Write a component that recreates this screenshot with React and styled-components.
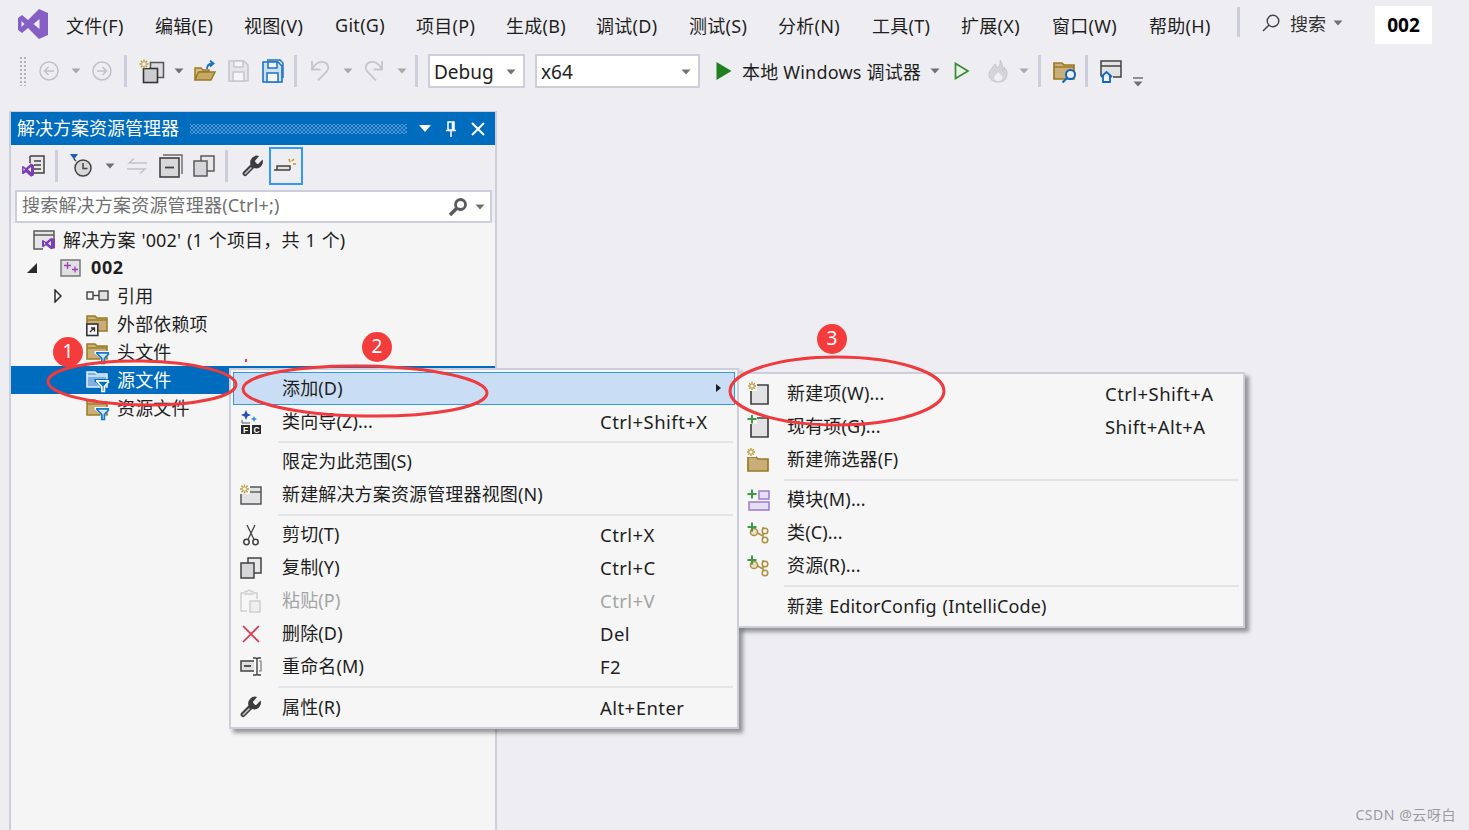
import React from "react";
import styled, { createGlobalStyle } from "styled-components";

const FONT = `"Noto Sans", "Noto Sans CJK SC", sans-serif`;

const Global = createGlobalStyle`
  html, body { margin: 0; padding: 0; background: #eeeef2; overflow: hidden; }
  #root { width: 1469px; height: 830px; }
`;

const Page = styled.div`
  position: relative;
  width: 1469px;
  height: 830px;
  overflow: hidden;
  display: flex;
  flex-direction: column;
  background: #eeeef2;
  font-family: ${FONT};
  font-size: 18px;
  color: #1e1e1e;
`;

/* ---------- top menu ---------- */
const MenuBar = styled.div`
  display: flex;
  align-items: center;
  height: 50px;
  padding-left: 18px;
  flex: none;
`;
const Logo = styled.svg`
  display: block;
  flex: none;
  margin-right: 18px;
  margin-top: -2px;
`;
const MenuEntry = styled.div`
  width: ${(p) => p.$w}px;
  flex: none;
  white-space: nowrap;
  letter-spacing: 0.3px;
`;
const MenuSep = styled.div`
  width: 3px;
  height: 30px;
  margin-top: -6px;
  background: #cccedb;
  flex: none;
`;
const SearchGroup = styled.div`
  display: flex;
  align-items: center;
  margin-left: 22px;
  margin-top: -4px;
  color: #333;
`;
const SearchWord = styled.span`
  margin: 0 7px 0 10px;
`;
const TitleBox = styled.div`
  margin-left: 32px;
  width: 57px;
  height: 38px;
  background: #fff;
  display: flex;
  align-items: center;
  justify-content: center;
  font-weight: 700;
  font-size: 19px;
  color: #000;
`;

/* ---------- main toolbar ---------- */
const ToolBar = styled.div`
  display: flex;
  align-items: center;
  height: 34px;
  margin-top: 4px;
  padding-left: 19px;
  flex: none;
`;
const Slot = styled.div`
  flex: none;
  width: ${(p) => p.$w}px;
  margin-left: ${(p) => p.$ml || 0}px;
  margin-top: ${(p) => p.$mt || 0}px;
  display: flex;
  align-items: center;
  justify-content: center;
`;
const ToolSep = styled.div`
  flex: none;
  width: 3px;
  height: 32px;
  margin-left: ${(p) => p.$ml || 0}px;
  background: #cccedb;
`;
const Gripper = styled.div`
  flex: none;
  width: 8px;
  height: 30px;
  background-image: radial-gradient(#b4b4ba 1px, transparent 1.2px);
  background-size: 4px 4px;
`;
const Combo = styled.div`
  flex: none;
  box-sizing: border-box;
  width: ${(p) => p.$w}px;
  margin-left: 10px;
  height: 34px;
  background: #fff;
  border: 2px solid #cccedb;
  display: flex;
  align-items: center;
  justify-content: space-between;
  padding: 1px 7px 0 4px;
  font-size: 19px;
`;
const RunLabel = styled.div`
  flex: none;
  width: 180px;
  margin-left: 10px;
  white-space: nowrap;
  letter-spacing: 0.2px;
`;

/* ---------- solution explorer ---------- */
const Panel = styled.div`
  margin: 23px 0 0 9px;
  width: 484px;
  flex: 1;
  min-height: 0;
  display: flex;
  flex-direction: column;
  border-left: 2px solid #cccedb;
  border-right: 2px solid #cccedb;
  border-top: 1px solid #cccedb;
`;
const TitleBar = styled.div`
  height: 33px;
  flex: none;
  background: #006cbe;
  color: #fff;
  display: flex;
  align-items: center;
  padding-left: 6px;
`;
const TitleText = styled.div`
  white-space: nowrap;
  flex: none;
  padding-bottom: 4px;
`;
const TitleDots = styled.div`
  flex: none;
  width: 217px;
  height: 10px;
  margin: 0 11px;
  background-image:
    radial-gradient(#4f97d6 0.9px, transparent 1.1px),
    radial-gradient(#4f97d6 0.9px, transparent 1.1px);
  background-size: 4px 4px;
  background-position: 0 0, 2px 2px;
`;
const TitleButton = styled.div`
  flex: none;
  width: 14px;
  margin-left: ${(p) => p.$ml || 0}px;
  display: flex;
  justify-content: center;
`;
const PanelTools = styled.div`
  height: 42px;
  flex: none;
  display: flex;
  align-items: center;
  padding-left: 10px;
`;
const ActiveTool = styled.div`
  flex: none;
  box-sizing: border-box;
  width: 34px;
  height: 38px;
  margin-left: 6px;
  border: 2px solid #3399ff;
  display: flex;
  align-items: center;
  justify-content: center;
`;
const PanelSep = styled.div`
  flex: none;
  width: 3px;
  height: 32px;
  margin-left: ${(p) => p.$ml || 0}px;
  background: #cccedb;
`;
const PanelSearch = styled.div`
  box-sizing: border-box;
  flex: none;
  height: 33px;
  margin: 3px 3px 0 4px;
  background: #fff;
  border: 2px solid #cccedb;
  display: flex;
  align-items: center;
  justify-content: space-between;
  padding: 0 5px;
  color: #717171;
`;
const SearchHint = styled.span`
  letter-spacing: 0.2px;
  padding-bottom: 5px;
`;
const SearchEnd = styled.div`
  display: flex;
  align-items: center;
  gap: 7px;
`;
const Tree = styled.div`
  flex: 1;
  background: #f5f5f5;
  padding-top: 3px;
`;
const TreeRow = styled.div`
  box-sizing: border-box;
  height: 28px;
  padding-bottom: 2px;
  display: flex;
  align-items: center;
  white-space: pre;
  word-spacing: 1px;
  letter-spacing: ${(p) => (p.$bold ? "0.6px" : "0.15px")};
  padding-left: ${(p) => p.$p}px;
  background: ${(p) => (p.$sel ? "#006cbe" : "transparent")};
  color: ${(p) => (p.$sel ? "#fff" : "#1e1e1e")};
  font-weight: ${(p) => (p.$bold ? 700 : 400)};
`;
const Expander = styled.div`
  flex: none;
  width: 10px;
  margin-top: 2px;
  display: flex;
  justify-content: center;
`;
const TreeIcon = styled.div`
  flex: none;
  width: ${(p) => p.$w}px;
  margin-left: ${(p) => p.$ml || 0}px;
  margin-right: ${(p) => p.$mr}px;
  margin-top: ${(p) => p.$mt ?? 6}px;
  display: flex;
  align-items: center;
`;

/* ---------- context menus ---------- */
const ContextMenu = styled.div`
  position: absolute;
  left: ${(p) => p.$x}px;
  top: ${(p) => p.$y}px;
  width: ${(p) => p.$w}px;
  box-sizing: border-box;
  background: #f6f6f6;
  border: 2px solid #cccedb;
  padding: ${(p) => p.$pt}px 2px 3px;
  box-shadow: 4px 4px 4px rgba(0, 0, 0, 0.38);
  z-index: ${(p) => p.$z};
`;
const Item = styled.div`
  box-sizing: border-box;
  height: 33px;
  display: flex;
  align-items: center;
  position: relative;
  white-space: nowrap;
  color: ${(p) => (p.$off ? "#a2a4a5" : "#1e1e1e")};
  background: ${(p) => (p.$hot ? "#c9def5" : "transparent")};
  outline: ${(p) => (p.$hot ? "1px solid #3399e0" : "none")};
  outline-offset: -1px;
`;
const ItemIcon = styled.div`
  flex: none;
  width: ${(p) => p.$w}px;
  display: flex;
  justify-content: center;
  align-items: center;
`;
const ItemLabel = styled.div`
  flex: none;
  width: 318px;
  margin-left: ${(p) => p.$ml}px;
  padding-bottom: ${(p) => p.$pb}px;
  letter-spacing: 0.15px;
  word-spacing: 1px;
`;
const ItemKeys = styled.div`
  flex: none;
  font-size: 18.5px;
  letter-spacing: 0.45px;
`;
const ItemArrow = styled.div`
  position: absolute;
  right: 14px;
  top: 12px;
  width: 0;
  height: 0;
  border-left: 5px solid #1e1e1e;
  border-top: 4px solid transparent;
  border-bottom: 4px solid transparent;
`;
const MenuRule = styled.div`
  height: ${(p) => p.$h || 7}px;
  display: flex;
  align-items: center;
  padding-left: ${(p) => p.$inset}px;
  padding-right: 2px;
  &::after {
    content: "";
    flex: 1;
    height: 2px;
    background: #e3e3e8;
  }
`;

/* ---------- annotations ---------- */
const Overlay = styled.svg`
  position: absolute;
  inset: 0;
  z-index: 5;
  pointer-events: none;
`;
const Badge = styled.div`
  position: absolute;
  left: ${(p) => p.$x - 15}px;
  top: ${(p) => p.$y - 15}px;
  width: 30px;
  height: 30px;
  border-radius: 50%;
  background: #f53c3c;
  color: #fff;
  font-size: 19px;
  line-height: 28px;
  text-align: center;
  z-index: 6;
`;
const Watermark = styled.div`
  position: absolute;
  right: 13px;
  bottom: 6px;
  font-size: 14px;
  letter-spacing: 0.55px;
  color: #9b9b9f;
  z-index: 6;
`;

/* ---------- icons ---------- */
const G = styled.svg`
  display: block;
  flex: none;
`;
const Svg = ({ w, h, children }) => (
  <G width={w} height={h} viewBox={`0 0 ${w} ${h}`} fill="none">
    {children}
  </G>
);
const Caret = ({ c = "#717171" }) => (
  <Svg w={10} h={6}>
    <path d="M0.5 0.5h9L5 5.5z" fill={c} />
  </Svg>
);
const Spark = ({ x, y, r = 4.5, c = "#c09c3c" }) => (
  <g stroke={c} strokeWidth="1.4">
    <path d={`M${x - r} ${y}H${x + r}M${x} ${y - r}V${y + r}`} />
    <path d={`M${x - r * 0.7} ${y - r * 0.7}L${x + r * 0.7} ${y + r * 0.7}M${x + r * 0.7} ${y - r * 0.7}L${x - r * 0.7} ${y + r * 0.7}`} />
    <circle cx={x} cy={y} r={r * 0.4} fill="#f6f6f6" stroke="none" />
  </g>
);
const Plus = ({ x, y, r = 5 }) => (
  <path d={`M${x - r} ${y}H${x + r}M${x} ${y - r}V${y + r}`} stroke="#3c9a48" strokeWidth="2" />
);
const Circle = ({ dir }) => (
  <Svg w={20} h={20}>
    <circle cx="10" cy="10" r="9" stroke="#c2c2c6" strokeWidth="1.5" />
    <path d={dir < 0 ? "M15 10H6M9.5 6L5.5 10l4 4" : "M5 10h9M10.5 6l4 4-4 4"} stroke="#c2c2c6" strokeWidth="1.5" />
  </Svg>
);
const NewProject = () => (
  <Svg w={26} h={25}>
    <rect x="11.500" y="3.500" width="13" height="15" fill="#dcdcde" stroke="#555" strokeWidth="1.500" />
    <rect x="4.500" y="9.500" width="14" height="14" fill="#cdcdd0" stroke="#333" strokeWidth="1.600" />
    <rect x="0" y="0" width="10" height="9" fill="#eeeef2" />
    <Spark x={5} y={5} r={4.600} />
  </Svg>
);
const OpenFolder = () => (
  <Svg w={22} h={22}>
    <path d="M1 8h6l2 2h6v2H5L1 20z" fill="#d6bd85" stroke="#9a7a22" strokeWidth="1.5" />
    <path d="M1 20l3.5-8H21l-4 8z" fill="#c7a865" stroke="#9a7a22" strokeWidth="1.5" />
    <path d="M13 9c0-4 2-5.5 6-5.5M16 0.8l3.5 2.7L16 6.5" stroke="#1c72c4" strokeWidth="1.8" />
  </Svg>
);
const Floppy = ({ c, f }) => (
  <>
    <path d="M1 1h15l4 4v16H1z" fill={f} stroke={c} strokeWidth="1.6" />
    <rect x="6" y="1" width="9" height="6" fill="#f5f5f7" stroke={c} strokeWidth="1.5" />
    <rect x="5" y="12" width="11" height="9" fill="#f5f5f7" stroke={c} strokeWidth="1.5" />
  </>
);
const Save = () => (
  <Svg w={22} h={22}>
    <Floppy c="#c6c6ca" f="#e6e6ea" />
  </Svg>
);
const SaveAll = () => (
  <Svg w={22} h={24}>
    <path d="M5 1h13l3 3v15" stroke="#1c72c4" strokeWidth="1.4" />
    <g transform="translate(0 2)">
      <Floppy c="#1c72c4" f="#cfe0f2" />
    </g>
  </Svg>
);
const Undo = ({ flip }) => (
  <Svg w={20} h={22}>
    <g transform={flip ? "matrix(-1 0 0 1 20 0)" : undefined} stroke="#c6c6ca" strokeWidth="1.800">
      <path d="M2 1v8.500h8.500" />
      <path d="M2.500 8.500C5 3.500 10 1 14 2.200c5 1.500 5 7 3 9L8 20.500" />
    </g>
  </Svg>
);
const Play = () => (
  <Svg w={16} h={20}>
    <path d="M0.5 1l15 9-15 9z" fill="#1f801f" />
  </Svg>
);
const PlayLine = () => (
  <Svg w={16} h={18}>
    <path d="M1.500 1.500l12.500 7.500-12.500 7.500z" fill="#e9f1e9" stroke="#388a34" strokeWidth="1.7" />
  </Svg>
);
const Flame = () => (
  <Svg w={20} h={24}>
    <path d="M12 1c1 5-1 6-3 8-1-2-1-3-2-4-2 4-6 6-6 11 0 4 4 7 9 7 6 0 9-3 9-8 0-3-1-5-3-7 0 2 0 3-1 4 0-4-1-8-3-11z" fill="#d5d5d8" stroke="#c6c6ca" />
    <path d="M10 13c-2 3-4 4-4 6 0 2 2 3 4 3 3 0 5-2 4-5z" fill="#f0f0f2" />
  </Svg>
);
const FolderFind = () => (
  <Svg w={24} h={24}>
    <path d="M1 3h8l2 2h10v14H1z" fill="#c9ae79" stroke="#9a7a22" strokeWidth="1.7" />
    <path d="M1 7h20" stroke="#9a7a22" strokeWidth="1.4" />
    <circle cx="17.500" cy="14.500" r="4.500" fill="#eef" stroke="#1166bb" strokeWidth="2" />
    <path d="M14 18l-4.500 4.500" stroke="#1166bb" strokeWidth="2.200" />
  </Svg>
);
const WindowHome = () => (
  <Svg w={22} h={24}>
    <path d="M1 16V1h20v16h-8" stroke="#424242" strokeWidth="1.5" fill="#e2e2e5" />
    <path d="M1 6h20" stroke="#424242" strokeWidth="1.5" />
    <path d="M1 17l5.500-5 5.500 5M3 15.500V22h7v-6.500" stroke="#1166bb" strokeWidth="1.800" fill="#f6f6fa" />
  </Svg>
);
const Overflow = () => (
  <Svg w={10} h={10}>
    <path d="M0 1h10" stroke="#717171" strokeWidth="1.500" />
    <path d="M0.500 4.500h9L5 9.500z" fill="#717171" />
  </Svg>
);
const Lens = ({ c = "#424242", s = 18 }) => (
  <G width={s} height={s} viewBox="0 0 18 18" fill="none">
    <circle cx="11" cy="7" r="5.800" stroke={c} strokeWidth="1.400" />
    <path d="M6.800 11.200L1 17" stroke={c} strokeWidth="1.500" />
  </G>
);
const SolSwitch = () => (
  <Svg w={24} h={22}>
    <path d="M9 1h14v17H12" fill="#e8e8ea" stroke="#424242" strokeWidth="1.500" />
    <path d="M9 1v8" stroke="#424242" strokeWidth="1.500" />
    <path d="M13 6h7M13 10h7M13 14h7" stroke="#424242" strokeWidth="1.400" />
    <path d="M12 9v13l-4-2-4-3-3 2V9l3 2 4-3z" fill="#eeeef2" />
    <path d="M13 10l-3-1.500-5 4.500-3-2-1 .6v7l1 .6 3-2 5 4.500 3-1.500zM2.500 13v3l1.500-1.500zM10 12l-3 2.500 3 2.500z" fill="#7b3fb5" fillRule="evenodd" />
  </Svg>
);
const History = () => (
  <Svg w={24} h={24}>
    <path d="M0 0h8L4 5.500z" fill="#1a5fb0" />
    <circle cx="13" cy="14" r="8" fill="#d8d8da" stroke="#424242" strokeWidth="1.500" />
    <path d="M13 9v5.500h4.500" stroke="#424242" strokeWidth="1.500" />
    <path d="M4 5l2 2" stroke="#424242" strokeWidth="1.500" />
  </Svg>
);
const Sync = () => (
  <Svg w={20} h={16}>
    <path d="M20 5H2l5-4.500M0 11h18l-5 4.500" stroke="#c2c2c6" strokeWidth="1.400" />
  </Svg>
);
const Collapse = () => (
  <Svg w={24} h={24}>
    <path d="M4 1h19v19" stroke="#6a6a6a" strokeWidth="1.400" />
    <rect x="1" y="4" width="19" height="19" fill="#d8d8da" stroke="#424242" strokeWidth="1.600" />
    <path d="M6 13.500h9" stroke="#424242" strokeWidth="1.800" />
  </Svg>
);
const CopyPages = ({ s = 22, c = "#5a5a5a" }) => (
  <G width={s} height={s} viewBox="0 0 22 22" fill="none">
    <rect x="8" y="1" width="13" height="15" fill="#e8e8ea" stroke={c} strokeWidth="1.500" />
    <rect x="1" y="6" width="13" height="15" fill="#d6d6d8" stroke={c} strokeWidth="1.500" />
  </G>
);
const Wrench = ({ s = 25 }) => (
  <G width={s} height={s} viewBox="0 0 24 24">
    <path d="M14.700 6.300a1 1 0 0 0 0 1.400l1.600 1.600a1 1 0 0 0 1.400 0l4-4a6.500 6.500 0 0 1-8.200 8.200l-6.900 6.900a2.400 2.400 0 0 1-3.400-3.400l6.900-6.900a6.500 6.500 0 0 1 8.200-8.200z" fill="#3c3c3c" />
    <path d="M11 13L4.500 19.500" stroke="#c4c4c4" strokeWidth="1.500" />
  </G>
);
const ShowAll = () => (
  <Svg w={24} h={18}>
    <path d="M0 13h16M3 13V9h13v4" stroke="#424242" strokeWidth="1.500" fill="#e0e0e0" />
    <path d="M15 2l1 3M19 7h3M18 4l2-2" stroke="#c49a1c" strokeWidth="1.500" />
  </Svg>
);
const SolutionIcon = () => (
  <Svg w={23} h={20}>
    <path d="M10 19H1V1h20v9" fill="#e6e6e8" stroke="#5a5a5a" strokeWidth="1.500" />
    <path d="M1 5h20" stroke="#5a5a5a" strokeWidth="1.500" />
    <path d="M22 9l-4-1-5 4-3-2-1 .6v6l1 .6 3-2 5 4 4-1zM11 12v3l1.500-1.500zM18 11l-3 2.500 3 2.500z" fill="#7b3fb5" fillRule="evenodd" />
  </Svg>
);
const ProjectIcon = () => (
  <Svg w={21} h={18}>
    <rect x="1" y="1" width="19" height="16" fill="#e0e0e2" stroke="#777" strokeWidth="1.500" />
    <path d="M4 6.500h7M7.500 3v7M12 10.500h6M15 7.500v6" stroke="#a33cb0" strokeWidth="1.300" />
  </Svg>
);
const RefIcon = () => (
  <Svg w={24} h={14}>
    <rect x="1" y="3" width="6" height="7" fill="#f5f5f5" stroke="#424242" strokeWidth="1.400" />
    <path d="M7 6.500h6" stroke="#424242" strokeWidth="1.400" />
    <rect x="13" y="2" width="9" height="9" fill="#e0e0e0" stroke="#424242" strokeWidth="1.400" />
  </Svg>
);
const FolderShape = ({ f = "#c9ae79", c = "#9a7a22" }) => (
  <>
    <path d="M1 1h8l2 2h10v13H1z" fill={f} stroke={c} strokeWidth="1.500" />
    <path d="M1 5h20" stroke={c} strokeWidth="1.300" />
  </>
);
const DepsIcon = () => (
  <Svg w={22} h={22}>
    <FolderShape />
    <rect x="0.800" y="9" width="11" height="11.500" fill="#f5f5f5" stroke="#333" strokeWidth="1.600" />
    <path d="M4 17l4-4M5 13h3.500v3.500" stroke="#333" strokeWidth="1.300" />
  </Svg>
);
const FilterIcon = ({ sel }) => (
  <Svg w={24} h={22}>
    {sel ? <FolderShape f="#7fb0e0" c="#e8f1fa" /> : <FolderShape />}
    <path d="M8.500 8h15v2.500L19.500 15v7h-5v-7l-6-4.500z" fill={sel ? "#006cbe" : "#f5f5f5"} />
    <path d="M10 9.800h13M11 10.500l4.800 5v5h2.600v-5l4.600-5" fill={sel ? "#006cbe" : "#d5e8f8"} stroke={sel ? "#fff" : "#1478cc"} strokeWidth="1.700" />
  </Svg>
);
const ClassWizard = () => (
  <Svg w={22} h={24}>
    <path d="M6 0l1.500 3.500L11 5 7.500 6.500 6 10 4.500 6.500 1 5l3.500-1.500z" fill="#2b4fb8" />
    <path d="M14 6l1 2 2 1-2 1-1 2-1-2-2-1 2-1z" fill="#2f8fe0" />
    <path d="M2 10v3h8" stroke="#555" strokeWidth="1" />
    <rect x="1" y="15" width="9" height="9" fill="#2a2a2a" />
    <rect x="12" y="15" width="9" height="9" fill="#2a2a2a" />
    <text x="5.500" y="22.700" fontSize="8.500" fontWeight="700" fill="#fff" textAnchor="middle" fontFamily="Liberation Sans">F</text>
    <text x="16.500" y="22.700" fontSize="8.500" fontWeight="700" fill="#fff" textAnchor="middle" fontFamily="Liberation Sans">C</text>
  </Svg>
);
const NewView = () => (
  <Svg w={23} h={22}>
    <rect x="2" y="3" width="20" height="17" fill="#e2e2e4" stroke="#555" strokeWidth="1.500" />
    <path d="M2 8h20" stroke="#555" strokeWidth="1.400" />
    <rect x="0" y="0" width="11" height="10" fill="#f6f6f6" />
    <Spark x={5.500} y={5} r={4.500} />
  </Svg>
);
const Scissors = () => (
  <Svg w={16} h={22}>
    <circle cx="3.500" cy="18" r="2.700" stroke="#424242" strokeWidth="1.500" />
    <circle cx="12.500" cy="18" r="2.700" stroke="#424242" strokeWidth="1.500" />
    <path d="M5 15.500L12 1M11 15.500L4 1" stroke="#424242" strokeWidth="1.300" />
  </Svg>
);
const Paste = () => (
  <Svg w={21} h={24}>
    <path d="M4 4H1v18h6M14 4h3v6" stroke="#d0d0d3" strokeWidth="1.500" />
    <path d="M5 5V2.500h2.500a1.500 1.500 0 0 1 3 0H13V5z" stroke="#d0d0d3" strokeWidth="1.300" />
    <rect x="10" y="12" width="10" height="11" fill="#efeff0" stroke="#d0d0d3" strokeWidth="1.500" />
  </Svg>
);
const Cross = () => (
  <Svg w={20} h={20}>
    <path d="M2 2l16 16M18 2L2 18" stroke="#d9344a" strokeWidth="1.700" />
  </Svg>
);
const Rename = () => (
  <Svg w={22} h={20}>
    <path d="M14 4H1v10h13" fill="#e0e0e2" stroke="#424242" strokeWidth="1.500" />
    <path d="M4 9h7" stroke="#424242" strokeWidth="1.800" />
    <path d="M13 1h3l1 1 1-1h3M17 2v15M13 18h3l1-1 1 1h3" stroke="#424242" strokeWidth="1.400" />
    <path d="M19 4h2v10h-2" stroke="#777" strokeWidth="1.200" />
  </Svg>
);
const DocNew = ({ plus }) => (
  <Svg w={23} h={24}>
    <path d="M6 3h15v19H4V8" fill="#e2e2e4" stroke="#424242" strokeWidth="1.700" />
    <rect x="0" y="0" width="10" height="9" fill="#f6f6f6" />
    {plus ? <Plus x={5} y={4} r={4.500} /> : <Spark x={5} y={4} r={4} />}
  </Svg>
);
const FolderNew = () => (
  <Svg w={24} h={24}>
    <path d="M2 9h8l2 2h10v12H2z" fill="#c9ae79" stroke="#9a7a22" strokeWidth="1.700" />
    <rect x="0" y="0" width="10" height="9" fill="#f6f6f6" />
    <Spark x={5} y={4} r={4} />
  </Svg>
);
const ModuleIcon = () => (
  <Svg w={23} h={22}>
    <Plus x={5} y={5} r={4.500} />
    <rect x="12" y="2" width="10" height="8" fill="#e6dff3" stroke="#a080cf" strokeWidth="1.600" />
    <rect x="2" y="13" width="20" height="8" fill="#e6dff3" stroke="#a080cf" strokeWidth="1.600" />
  </Svg>
);
const NodesIcon = () => (
  <Svg w={23} h={22}>
    <path d="M7 9l9 5M16 5v13" stroke="#b08f40" strokeWidth="1.500" />
    <circle cx="7" cy="10" r="3.600" fill="#e8dfc4" stroke="#b08f40" strokeWidth="1.500" />
    <circle cx="18" cy="9" r="2.800" fill="#f6f6f6" stroke="#b08f40" strokeWidth="1.500" />
    <circle cx="18" cy="18" r="2.800" fill="#f6f6f6" stroke="#b08f40" strokeWidth="1.500" />
    <Plus x={5} y={5} r={4.500} />
  </Svg>
);

/* ---------- data ---------- */
const menus = [
  ["文件(F)", 89], ["编辑(E)", 89], ["视图(V)", 91], ["Git(G)", 81], ["项目(P)", 90],
  ["生成(B)", 90], ["调试(D)", 93], ["测试(S)", 89], ["分析(N)", 94], ["工具(T)", 89],
  ["扩展(X)", 91], ["窗口(W)", 97], ["帮助(H)", 88],
];

const Row = ({ icon, label, keys, off, hot, w, ml, pb }) => (
  <Item $off={off} $hot={hot}>
    <ItemIcon $w={w}>{icon}</ItemIcon>
    <ItemLabel $ml={ml} $pb={pb}>{label}</ItemLabel>
    {keys && <ItemKeys>{keys}</ItemKeys>}
    {hot && <ItemArrow />}
  </Item>
);

export default function App() {
  const main = { w: 35, ml: 14, pb: 3 };
  const sub = { w: 34, ml: 12, pb: 4 };
  return (
    <Page>
      <Global />
      <MenuBar>
        <Logo width="30" height="30" viewBox="0 0 30 30">
          <path
            fillRule="evenodd"
            fill="#865fc5"
            d="M21 0l9 4v22l-9 4-11-11-6 5-4-3V9l4-3 6 5zM3.500 12v6l3-3zM15.500 15l6 5V10z"
          />
        </Logo>
        {menus.map(([t, w]) => (
          <MenuEntry key={t} $w={w}>{t}</MenuEntry>
        ))}
        <MenuSep />
        <SearchGroup>
          <Lens />
          <SearchWord>搜索</SearchWord>
          <Caret />
        </SearchGroup>
        <TitleBox>002</TitleBox>
      </MenuBar>

      <ToolBar>
        <Gripper />
        <Slot $w={20} $ml={12}><Circle dir={-1} /></Slot>
        <Slot $w={10} $ml={12}><Caret c="#a8a8ac" /></Slot>
        <Slot $w={20} $ml={11}><Circle dir={1} /></Slot>
        <ToolSep $ml={12} />
        <Slot $w={26} $ml={12}><NewProject /></Slot>
        <Slot $w={10} $ml={9}><Caret /></Slot>
        <Slot $w={22} $ml={10}><OpenFolder /></Slot>
        <Slot $w={22} $ml={12}><Save /></Slot>
        <Slot $w={22} $ml={12}><SaveAll /></Slot>
        <ToolSep $ml={10} />
        <Slot $w={20} $ml={13}><Undo /></Slot>
        <Slot $w={10} $ml={13}><Caret c="#a8a8ac" /></Slot>
        <Slot $w={20} $ml={11}><Undo flip /></Slot>
        <Slot $w={10} $ml={13}><Caret c="#a8a8ac" /></Slot>
        <ToolSep $ml={8} />
        <Combo $w={97}>Debug<Caret /></Combo>
        <Combo $w={165}>x64<Caret /></Combo>
        <Slot $w={16} $ml={16}><Play /></Slot>
        <RunLabel>本地 Windows 调试器</RunLabel>
        <Slot $w={10} $ml={8}><Caret /></Slot>
        <Slot $w={16} $ml={14}><PlayLine /></Slot>
        <Slot $w={20} $ml={18}><Flame /></Slot>
        <Slot $w={10} $ml={11}><Caret c="#a8a8ac" /></Slot>
        <ToolSep $ml={9} />
        <Slot $w={23} $ml={12} $mt={2}><FolderFind /></Slot>
        <ToolSep $ml={9} />
        <Slot $w={22} $ml={12} $mt={2}><WindowHome /></Slot>
        <Slot $w={10} $ml={11} $mt={22}><Overflow /></Slot>
      </ToolBar>

      <Panel>
        <TitleBar>
          <TitleText>解决方案资源管理器</TitleText>
          <TitleDots />
          <TitleButton>
            <Svg w={12} h={7}><path d="M0 0h12L6 7z" fill="#fff" /></Svg>
          </TitleButton>
          <TitleButton $ml={12}>
            <Svg w={12} h={16}>
              <path d="M3 1h6v8H3zM1 9.500h10M6 10v6M7.500 1v8" stroke="#fff" strokeWidth="1.500" />
            </Svg>
          </TitleButton>
          <TitleButton $ml={13}>
            <Svg w={14} h={14}><path d="M1 1l12 12M13 1L1 13" stroke="#fff" strokeWidth="2" /></Svg>
          </TitleButton>
        </TitleBar>
        <PanelTools>
          <SolSwitch />
          <PanelSep $ml={10} />
          <Slot $w={24} $ml={12}><History /></Slot>
          <Slot $w={10} $ml={11}><Caret /></Slot>
          <Slot $w={20} $ml={12}><Sync /></Slot>
          <Slot $w={24} $ml={12}><Collapse /></Slot>
          <Slot $w={22} $ml={10}><CopyPages /></Slot>
          <PanelSep $ml={10} />
          <Slot $w={22} $ml={13}><Wrench /></Slot>
          <ActiveTool><ShowAll /></ActiveTool>
        </PanelTools>
        <PanelSearch>
          <SearchHint>搜索解决方案资源管理器(Ctrl+;)</SearchHint>
          <SearchEnd>
            <Svg w={20} h={20}>
              <circle cx="12.500" cy="7.500" r="5" stroke="#5a5a5a" strokeWidth="2.800" />
              <path d="M8.500 11.500L2 18" stroke="#5a5a5a" strokeWidth="3.500" />
            </Svg>
            <Caret />
          </SearchEnd>
        </PanelSearch>
        <Tree>
          <TreeRow $p={22}>
            <TreeIcon $w={23} $mr={7} $mt={2}><SolutionIcon /></TreeIcon>
            解决方案 '002' (1 个项目，共 1 个)
          </TreeRow>
          <TreeRow $p={16} $bold>
            <Expander>
              <Svg w={10} h={10}><path d="M10 0v10H0z" fill="#2a2a2a" /></Svg>
            </Expander>
            <TreeIcon $w={21} $ml={23} $mr={10} $mt={2}><ProjectIcon /></TreeIcon>
            002
          </TreeRow>
          <TreeRow $p={42}>
            <Expander>
              <Svg w={8} h={14}><path d="M1 1l6 6-6 6z" stroke="#2a2a2a" strokeWidth="1.500" /></Svg>
            </Expander>
            <TreeIcon $w={24} $ml={23} $mr={7} $mt={2}><RefIcon /></TreeIcon>
            引用
          </TreeRow>
          <TreeRow $p={42}>
            <Expander />
            <TreeIcon $w={24} $ml={23} $mr={7}><DepsIcon /></TreeIcon>
            外部依赖项
          </TreeRow>
          <TreeRow $p={42}>
            <Expander />
            <TreeIcon $w={24} $ml={23} $mr={7}><FilterIcon /></TreeIcon>
            头文件
          </TreeRow>
          <TreeRow $p={42} $sel>
            <Expander />
            <TreeIcon $w={24} $ml={23} $mr={7}><FilterIcon sel /></TreeIcon>
            源文件
          </TreeRow>
          <TreeRow $p={42}>
            <Expander />
            <TreeIcon $w={24} $ml={23} $mr={7}><FilterIcon /></TreeIcon>
            资源文件
          </TreeRow>
        </Tree>
      </Panel>

      <ContextMenu $x={229} $y={368} $w={510} $z={2} $pt={2}>
        <Row {...main} hot label="添加(D)" />
        <Row {...main} icon={<ClassWizard />} label="类向导(Z)..." keys="Ctrl+Shift+X" />
        <MenuRule $inset={45} />
        <Row {...main} label="限定为此范围(S)" />
        <Row {...main} icon={<NewView />} label="新建解决方案资源管理器视图(N)" />
        <MenuRule $inset={45} />
        <Row {...main} icon={<Scissors />} label="剪切(T)" keys="Ctrl+X" />
        <Row {...main} icon={<CopyPages c="#424242" />} label="复制(Y)" keys="Ctrl+C" />
        <Row {...main} off icon={<Paste />} label="粘贴(P)" keys="Ctrl+V" />
        <Row {...main} icon={<Cross />} label="删除(D)" keys="Del" />
        <Row {...main} icon={<Rename />} label="重命名(M)" keys="F2" />
        <MenuRule $inset={45} $h={8} />
        <Row {...main} icon={<Wrench />} label="属性(R)" keys="Alt+Enter" />
      </ContextMenu>

      <ContextMenu $x={737} $y={372} $w={508} $z={3} $pt={3}>
        <Row {...sub} icon={<DocNew />} label="新建项(W)..." keys="Ctrl+Shift+A" />
        <Row {...sub} icon={<DocNew plus />} label="现有项(G)..." keys="Shift+Alt+A" />
        <Row {...sub} icon={<FolderNew />} label="新建筛选器(F)" />
        <MenuRule $inset={43} />
        <Row {...sub} icon={<ModuleIcon />} label="模块(M)..." />
        <Row {...sub} icon={<NodesIcon />} label="类(C)..." />
        <Row {...sub} icon={<NodesIcon />} label="资源(R)..." />
        <MenuRule $inset={43} $h={8} />
        <Row {...sub} label="新建 EditorConfig (IntelliCode)" />
      </ContextMenu>

      <Overlay width="1469" height="830" viewBox="0 0 1469 830" fill="none">
        <g stroke="#ef3a3e" strokeWidth="3">
          <ellipse cx="142" cy="383" rx="94" ry="22" transform="rotate(1 142 383)" />
          <ellipse cx="365" cy="391" rx="122" ry="25" transform="rotate(1 365 391)" />
          <ellipse cx="837" cy="391" rx="107" ry="34" />
        </g>
        <rect x="245" y="359" width="2" height="3" fill="#ef3a3e" />
      </Overlay>
      <Badge $x={68} $y={352}>1</Badge>
      <Badge $x={377} $y={347}>2</Badge>
      <Badge $x={832} $y={339}>3</Badge>
      <Watermark>CSDN @云呀白</Watermark>
    </Page>
  );
}
